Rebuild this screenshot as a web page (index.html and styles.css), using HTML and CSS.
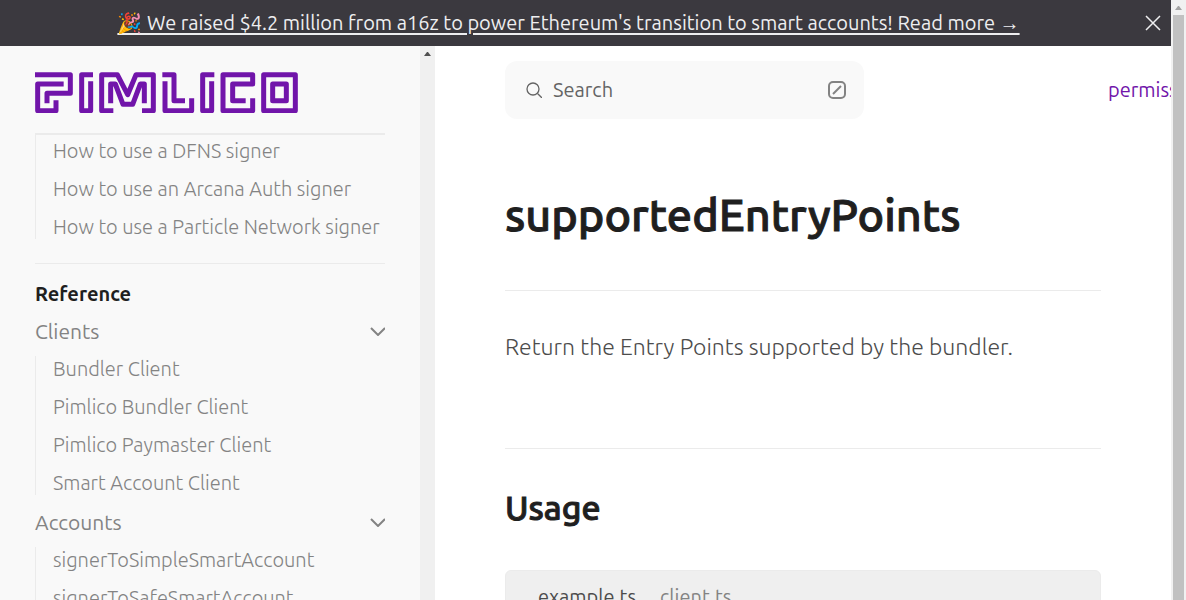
FILE: index.html
```html
<!DOCTYPE html>
<html lang="en">
<head>
<meta charset="utf-8">
<title>supportedEntryPoints</title>
<link rel="stylesheet" href="styles.css">
</head>
<body>
<div class="window">
  <div class="page">
    <div class="banner">
      <div class="banner-text"><a class="banner-link" href="#">🎉 We raised $4.2 million from a16z to power Ethereum's transition to smart accounts! Read more →</a></div>
      <button class="banner-close" type="button" aria-label="Close banner">
        <svg width="16" height="16" viewBox="0 0 16 16"><path d="M1 1L15 15M15 1L1 15"/></svg>
      </button>
    </div>
    <div class="columns">
      <aside class="sidebar">
        <div class="sidebar-body">
          <a class="logo" href="#" aria-label="Pimlico">
            <svg viewBox="45 78 789 123">
              <path d="M45 86H151V142H81V172M131 114H53V194H108V163"/>
              <path d="M219 86H185V194H212V106"/>
              <path d="M280 194H245V86H292L323 146L348 86H400V194H366"/>
              <path d="M272 172V114H286L309 175H338L361 114H373V172"/>
              <path d="M427 86H462V164H495M435 106V194H515V157"/>
              <path d="M583 86H548V194H575V106"/>
              <path d="M677 164H638V114H698V86H609V194H698V157"/>
              <path d="M731 86H826V194H731ZM758 114H799V164H758Z"/>
            </svg>
          </a>
          <nav class="nav">
            <ul class="links links-first">
              <li><a href="#">How to use a DFNS signer</a></li>
              <li><a href="#">How to use an Arcana Auth signer</a></li>
              <li><a href="#">How to use a Particle Network signer</a></li>
            </ul>
            <div class="reference">
              <div class="nav-title">Reference</div>
              <button class="group" type="button">Clients
                <svg width="16" height="10" viewBox="0 0 16 10"><path d="M2 2L9 9L16 2"/></svg>
              </button>
              <ul class="links">
                <li><a href="#">Bundler Client</a></li>
                <li><a href="#">Pimlico Bundler Client</a></li>
                <li><a href="#">Pimlico Paymaster Client</a></li>
                <li><a href="#">Smart Account Client</a></li>
              </ul>
              <button class="group" type="button">Accounts
                <svg width="16" height="10" viewBox="0 0 16 10"><path d="M2 2L9 9L16 2"/></svg>
              </button>
              <ul class="links">
                <li><a href="#">signerToSimpleSmartAccount</a></li>
                <li><a href="#">signerToSafeSmartAccount</a></li>
              </ul>
            </div>
          </nav>
        </div>
        <div class="side-scroll"><svg width="7" height="4" viewBox="0 0 7 4"><path d="M0 4L3 0H4L7 4Z"/></svg></div>
      </aside>
      <main class="main">
        <header class="topbar">
          <button class="search" type="button">
            <svg class="search-icon" width="16" height="16" viewBox="0 0 16 16"><circle cx="7" cy="7" r="6"/><path d="M11.500 11.500L16 16"/></svg>
            <span class="search-label">Search</span>
            <svg class="slash-icon" width="18" height="18" viewBox="0 0 18 18"><rect x="1" y="1" width="16" height="16" rx="4"/><path d="M5 13L13 5"/></svg>
          </button>
          <a class="top-link" href="#">permissionless.js</a>
        </header>
        <article class="article">
          <h1>supportedEntryPoints</h1>
          <p>Return the Entry Points supported by the bundler.</p>
          <h2>Usage</h2>
          <div class="code-tabs">
            <button class="tab tab-active" type="button">example.ts</button>
            <button class="tab" type="button">client.ts</button>
          </div>
        </article>
      </main>
    </div>
  </div>
  <div class="page-scroll">
    <svg width="7" height="4" viewBox="0 0 7 4"><path d="M0 4L3 0H4L7 4Z"/></svg>
    <div class="thumb"></div>
  </div>
</div>
</body>
</html>
```
FILE: styles.css
```css
* { box-sizing: border-box; }
body {
  margin: 0;
  font-family: Ubuntu, "Noto Sans", sans-serif;
  font-size: 20px;
  line-height: 24px;
  color: #4c4c4c;
  background: #fff;
}
a { color: inherit; text-decoration: none; }
button { border: 0; padding: 0; background: none; color: inherit; font: inherit; cursor: pointer; }
svg { display: block; flex: none; fill: none; }
ul { list-style: none; margin: 0; padding: 0; }
.window { display: flex; height: 100vh; overflow: hidden; }
.page { flex: 1; min-width: 0; display: flex; flex-direction: column; }
.banner {
  flex: none;
  display: flex;
  align-items: center;
  height: 46px;
  padding-right: 10px;
  background: #3b393f;
  color: #eeeef0;
}
.banner-text { flex: 1; padding-right: 8px; text-align: center; white-space: nowrap; }
.banner-link {
  text-decoration: underline;
  text-decoration-thickness: 2px;
  text-underline-offset: 3px;
}
.banner-close svg { stroke: #eeeef0; stroke-width: 1.500; }
.columns { flex: 1; min-height: 0; display: flex; }
.sidebar { flex: none; display: flex; width: 435px; background: #f9f9f9; overflow: hidden; }
.sidebar-body { flex: 1; min-width: 0; padding: 26px 35px 0; }
.logo { display: block; padding-bottom: 20px; border-bottom: 2px solid #ebebeb; }
.logo svg { width: 263px; height: 41px; stroke: #7115aa; stroke-width: 15; stroke-linejoin: round; }
.side-scroll { width: 15px; padding: 6px 4px; background: #f0f0f0; fill: #505050; }
.side-scroll svg, .page-scroll svg { fill: inherit; }
.links {
  display: grid;
  gap: 13px;
  margin-bottom: 2px;
  border-left: 1px solid #ebebeb;
  padding-left: 17px;
}
.links a {
  display: block;
  color: #838383;
  line-height: 25px;
  font-weight: 300;
  white-space: nowrap;
}
.links-first { padding-top: 3px; }
.reference { margin-top: 24px; padding-top: 18px; border-top: 1px solid #ebebeb; }
.nav-title { font-weight: 700; color: #1f1f1f; }
.group {
  display: flex;
  align-items: center;
  justify-content: space-between;
  width: 100%;
  padding: 13px 0;
  color: #838383;
  font-size: 21px;
}
.group svg { stroke: #838383; stroke-width: 2; }
.main { flex: 1; min-width: 0; padding: 15px 0 0 70px; overflow: hidden; }
.topbar { display: flex; align-items: center; justify-content: space-between; height: 58px; }
.search {
  flex: none;
  display: flex;
  align-items: center;
  gap: 11px;
  width: 359px;
  height: 58px;
  padding: 0 18px 0 21px;
  border-radius: 12px;
  background: #f9f9f9;
  color: #646464;
}
.search-label { flex: 1; text-align: left; }
.search-icon { stroke: #646464; stroke-width: 1.300; }
.slash-icon { stroke: #838383; stroke-width: 2; }
.top-link { width: 63px; white-space: nowrap; color: #7115aa; }
.article { margin-right: 70px; }
h1, h2, p { margin: 0; }
h1, h2 { color: #1f1f1f; font-weight: 500; -webkit-text-stroke: 1px #1f1f1f; }
h1 {
  padding: 64px 0 43px;
  border-bottom: 1px solid #ebebeb;
  font-size: 45px;
  line-height: 64px;
}
p { padding: 40px 0 85px; font-size: 23px; line-height: 32px; font-weight: 300; }
h2 {
  padding: 38px 0 42px;
  border-top: 1px solid #ebebeb;
  font-size: 34px;
  line-height: 41px;
}
.code-tabs {
  display: flex;
  gap: 24px;
  padding: 14px 32px;
  border: 1px solid #ebebeb;
  border-radius: 6px;
  background: #efefef;
}
.tab { color: #838383; }
.tab-active { color: #4c4c4c; }
.page-scroll { flex: none; display: flex; flex-direction: column; width: 15px; padding: 6px 2px 0; background: #f1f1f1; fill: #a3a3a3; }
.page-scroll svg { margin-left: 2px; }
.thumb { flex: 1; margin-top: 5px; background: #c1c1c1; }
```
